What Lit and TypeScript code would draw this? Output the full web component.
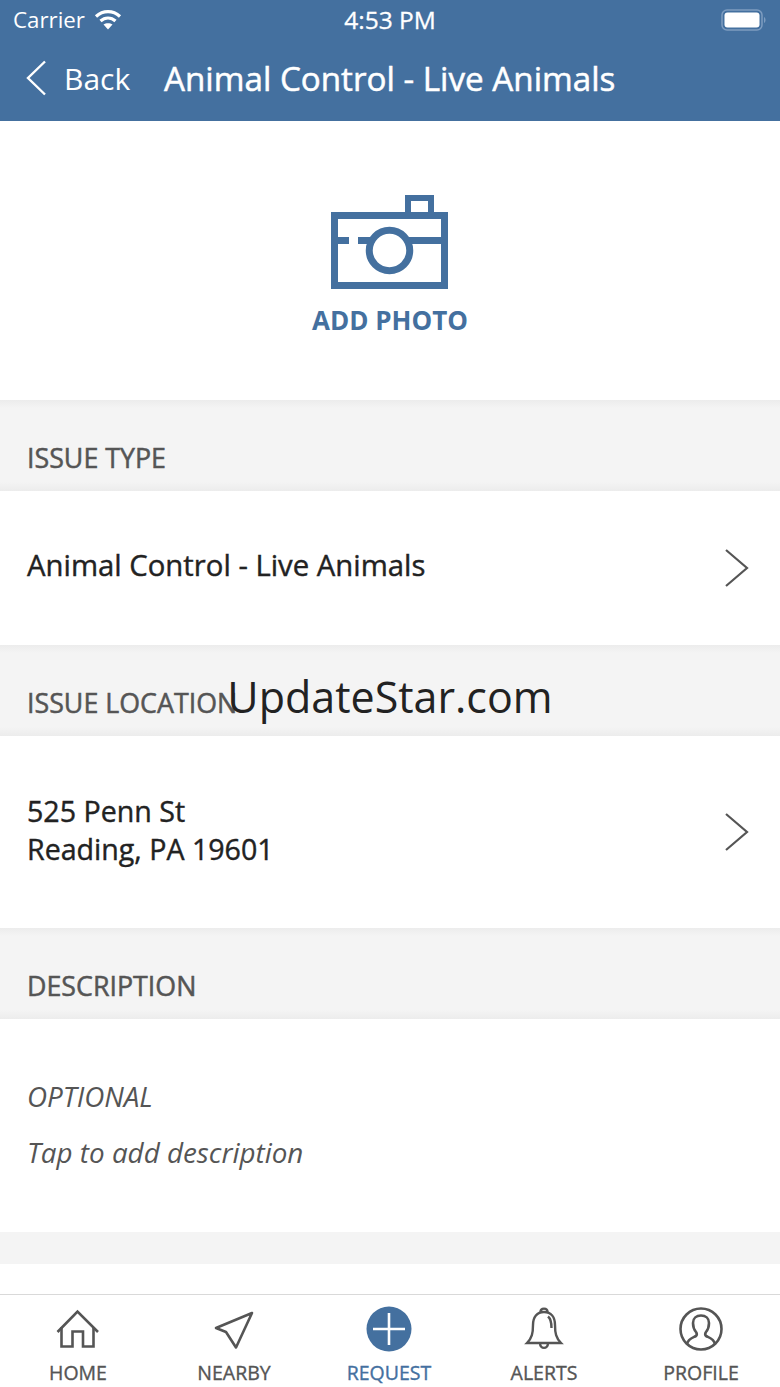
import { LitElement, html, css } from "lit";
import { customElement } from "lit/decorators.js";

const chevron = html`<svg class="chev" width="26" height="40" viewBox="0 0 26 40" fill="none" stroke="#555" stroke-width="2.2"><path d="M2 2 L23 20 L2 38" /></svg>`;

@customElement("app-root")
export class AppRoot extends LitElement {
  static styles = css`
    :host { display: block; width: 780px; height: 1387px; position: relative; overflow: hidden; background: #fff; font-family: "Open Sans", sans-serif; }
    * { box-sizing: border-box; }
    .page { display: flex; flex-direction: column; height: 1387px; }
    .header { height: 121px; flex: none; background: #44709f; color: #fff; display: flex; flex-direction: column; }
    .status { height: 39px; display: grid; grid-template-columns: 1fr auto 1fr; align-items: center; padding: 0 13px; font-size: 22.3px; }
    .status-left { display: flex; align-items: center; gap: 9px; }
    .status-right { display: flex; justify-content: flex-end; }
    .time { font-size: 24.5px; -webkit-text-stroke: 0.3px currentColor; }
    .nav { flex: 1; display: flex; align-items: center; padding: 0 0 4px 25px; }
    .back { font-size: 30px; margin-left: 17px; width: 100px; }
    .title { font-size: 33.2px; -webkit-text-stroke: 0.5px currentColor; }
    .photo { height: 279px; flex: none; display: flex; flex-direction: column; align-items: center; padding-top: 74px; color: #44709f; }
    .photo-label { font-size: 26px; font-weight: 700; line-height: 36px; margin-top: 12px; }
    .sec { height: 91px; flex: none; background: linear-gradient(#ececec, #f4f4f4 8px, #f4f4f4 82px, #ececec); padding: 41px 27px 0; font-size: 26.8px; -webkit-text-stroke: 0.5px currentColor; color: #555; line-height: 34px; }
    .row { flex: none; display: flex; align-items: center; justify-content: space-between; padding: 0 30px 6px 27px; font-size: 29.3px; -webkit-text-stroke: 0.4px currentColor; color: #222; line-height: 38px; }
    .row svg { margin-top: 6px; }
    .row-a { height: 154px; }
    .row-b { height: 192px; font-size: 28.6px; padding-bottom: 4px; }
    .row-b svg { margin-top: 4px; }
    .desc { height: 213px; flex: none; padding: 58px 27px 0; font-size: 27.8px; font-style: italic; color: #555; line-height: 38px; }
    .desc div + div { margin-top: 18px; }
    .spacer { height: 32px; flex: none; background: #f4f4f4; }
    .gap { flex: 1; }
    .tabs { height: 93px; flex: none; border-top: 1.5px solid #d9d9d9; display: grid; grid-template-columns: 156px 156px 154px 156px 158px; }
    .tab { display: flex; flex-direction: column; align-items: center; padding-top: 11px; font-size: 19.5px; color: #555; }
    .tab svg { height: 46px; display: block; }
    .tab span { line-height: 26px; margin-top: 8px; -webkit-text-stroke: 0.35px currentColor; }
    .tab.on { color: #44709f; }
    .mark { position: absolute; left: 0; right: 0; top: 667px; text-align: center; font-size: 43px; line-height: 60px; color: #222; }
  `;

  render() {
    return html`
      <div class="page">
        <div class="header">
          <div class="status">
            <div class="status-left">Carrier
              <svg width="28" height="22" viewBox="0 0 28 22" fill="none" stroke="#fff" stroke-width="3.2">
                <path d="M2 7.5 C9 1 19 1 26 7.5" /><path d="M6.5 12 C11 8 17 8 21.5 12" />
                <path d="M14 20.5 L9.5 15.5 C12 13.8 16 13.8 18.5 15.5 Z" fill="#fff" stroke="none" />
              </svg>
            </div>
            <div class="time">4:53 PM</div>
            <div class="status-right">
              <svg width="46" height="24" viewBox="0 0 46 24">
                <rect x="1" y="2" width="40" height="20" rx="5" fill="none" stroke="#7d9cc0" stroke-width="1.5" />
                <rect x="3.5" y="4.5" width="35" height="15" rx="3" fill="#fff" />
                <path d="M43 9 C45 10 45 14 43 15 Z" fill="#7d9cc0" />
              </svg>
            </div>
          </div>
          <div class="nav">
            <svg width="22" height="36" viewBox="0 0 22 36" fill="none" stroke="#fff" stroke-width="2.4"><path d="M20 1.5 L3 18 L20 34.5" /></svg>
            <div class="back">Back</div>
            <div class="title">Animal Control - Live Animals</div>
          </div>
        </div>

        <div class="photo">
          <svg width="118" height="95" viewBox="0 0 118 95" fill="none" stroke="#44709f" stroke-width="7">
            <rect x="3.5" y="20.5" width="110" height="70" />
            <path d="M77 20 V3 H100 V20" stroke-width="6" />
            <path d="M4 45.5 H18 M27 45.5 H41 M76 45.5 H113" />
            <circle cx="58.5" cy="55.5" r="20.25" />
          </svg>
          <div class="photo-label">ADD PHOTO</div>
        </div>

        <div class="sec">ISSUE TYPE</div>
        <div class="row row-a"><div>Animal Control - Live Animals</div>${chevron}</div>
        <div class="sec">ISSUE LOCATION</div>
        <div class="row row-b"><div>525 Penn St<br />Reading, PA 19601</div>${chevron}</div>
        <div class="sec">DESCRIPTION</div>
        <div class="desc"><div>OPTIONAL</div><div>Tap to add description</div></div>
        <div class="spacer"></div>
        <div class="gap"></div>

        <div class="tabs">
          <div class="tab">
            <svg width="46" height="46" viewBox="0 0 46 46" fill="none" stroke="#555" stroke-width="2.6">
              <path d="M2.5 26 L22.5 5.5 L43 26" />
              <path d="M6.5 21 V40.5 H17.5 V25.5 H28 V40.5 H38.5 V21" />
            </svg>
            <span>HOME</span>
          </div>
          <div class="tab">
            <svg width="46" height="46" viewBox="0 0 46 46" fill="none" stroke="#555" stroke-width="2.6" stroke-linejoin="round">
              <path d="M41 7 L5 22 L15 26 L25 41.5 Z" />
            </svg>
            <span>NEARBY</span>
          </div>
          <div class="tab on">
            <svg width="46" height="46" viewBox="0 0 46 46">
              <circle cx="23" cy="23" r="22.5" fill="#44709f" />
              <path d="M23 7 V39 M7 23 H39" stroke="#fff" stroke-width="2.6" />
            </svg>
            <span>REQUEST</span>
          </div>
          <div class="tab">
            <svg width="46" height="46" viewBox="0 0 46 46" fill="none" stroke="#555" stroke-width="2.4">
              <path d="M6 37 C11 32 12 27 12 19 C12 11 16 6 23 6 C30 6 34 11 34 19 C34 27 35 32 40 37 Z" />
              <path d="M19.5 6 C19.5 1.5 26.5 1.5 26.5 6" />
              <path d="M19 37 C19 43.5 27 43.5 27 37" />
              <path d="M27 10.5 C30 13 30.5 17 30.5 22" />
            </svg>
            <span>ALERTS</span>
          </div>
          <div class="tab">
            <svg width="46" height="46" viewBox="0 0 46 46" fill="none" stroke="#555" stroke-width="2.6">
              <circle cx="23" cy="23" r="20.5" />
              <path d="M9 38 C10 33 14 32 18 30 C19 29 19 27.5 18 26 C15.5 23 15 20 15 17 C15 12 18.5 9.5 23 9.5 C27.5 9.5 31 12 31 17 C31 20 30.5 23 28 26 C27 27.5 27 29 28 30 C32 32 36 33 37 38" />
            </svg>
            <span>PROFILE</span>
          </div>
        </div>
      </div>
      <div class="mark">UpdateStar.com</div>
    `;
  }
}
